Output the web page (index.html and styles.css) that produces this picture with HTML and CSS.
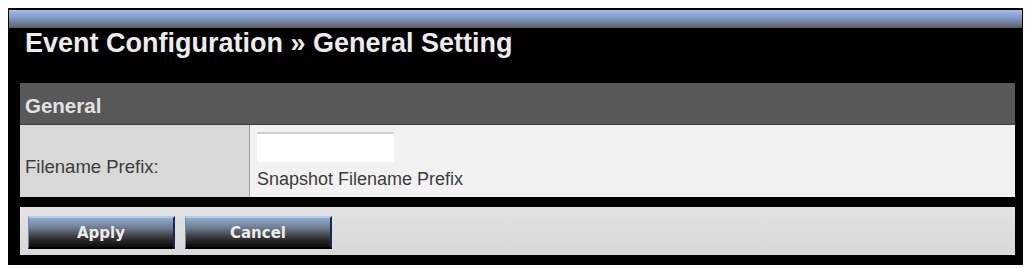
FILE: index.html
```html
<!DOCTYPE html>
<html lang="en">
<head>
    <meta charset="UTF-8">
    <title>Event Configuration - General Setting</title>
    <link rel="stylesheet" href="styles.css">
</head>
<body>

    <!-- Main Panel -->
    <div class="panel">
        <div class="panel-bar"></div>
        <h1 class="panel-title">Event Configuration &raquo; General Setting</h1>

        <!-- General Section -->
        <div class="section">
            <div class="section-head">General</div>
            <div class="form-row">
                <div class="form-label">Filename Prefix:</div>
                <div class="form-value">
                    <input type="text" class="text-input">
                    <div class="hint">Snapshot Filename Prefix</div>
                </div>
            </div>
        </div>

        <!-- Buttons -->
        <div class="button-bar">
            <button type="button" class="btn">Apply</button>
            <button type="button" class="btn">Cancel</button>
        </div>
    </div>

</body>
</html>
```

FILE: styles.css
```css
/* General Styles */
body {
    margin: 8px 0 0 8px;
    font-family: 'Liberation Sans', Arial, sans-serif;
    background-color: #fff;
}

/* Panel */
.panel {
    width: 1015px;
    height: 257px;
    background-color: #000;
    padding: 2px 1px 0;
    box-sizing: border-box;
}

.panel-bar {
    height: 18px;
    background: linear-gradient(#a4bce6, #7f98c8 45%, #6e7486 80%, #5c5c60);
}

.panel-title {
    margin: 0;
    height: 55px;
    padding-left: 16px;
    font-size: 27px;
    line-height: 31px;
    font-weight: 700;
    color: #ececec;
}

/* Section */
.section {
    margin: 0 7px 0 11px;
}

.section-head {
    height: 42px;
    box-sizing: border-box;
    padding: 5px 0 0 5px;
    display: flex;
    align-items: center;
    background-color: #585858;
    border-bottom: 1px solid #3a3a3a;
    color: #e2e2e2;
    font-size: 20.5px;
    font-weight: 700;
}

.form-row {
    display: flex;
    height: 72px;
}

.form-label {
    width: 230px;
    box-sizing: border-box;
    padding: 12px 0 0 5px;
    display: flex;
    align-items: center;
    background-color: #d8d8d8;
    border-right: 1px solid #9a9a9a;
    color: #3c3c3c;
    font-size: 18.5px;
}

.form-value {
    flex: 1;
    padding: 7px 7px 0;
    background-color: #f2f2f2;
}

.text-input {
    display: block;
    width: 137px;
    height: 30px;
    margin: 0;
    padding: 0 4px;
    border: none;
    border-top: 2px solid #cfcfcf;
    background-color: #fff;
    box-sizing: border-box;
}

.hint {
    margin-top: 7px;
    font-size: 18px;
    color: #3c3c3c;
}

/* Button Bar */
.button-bar {
    display: flex;
    gap: 10px;
    height: 48px;
    box-sizing: border-box;
    margin: 10px 7px 0 11px;
    padding: 9px 8px 0;
    background: linear-gradient(#e2e2e2, #d8d8d8);
}

.btn {
    width: 147px;
    height: 33px;
    padding: 0;
    border-top: 2px solid #aecaf0;
    border-left: 1px solid #7088b4;
    border-right: 2px solid #1a2756;
    border-bottom: 2px solid #000;
    background: linear-gradient(#93abcf, #6f7a8e 35%, #3a3a3c 65%, #0a0a0a);
    color: #ececec;
    font-family: 'DejaVu Sans', Verdana, sans-serif;
    font-size: 15px;
    font-weight: 700;
    cursor: pointer;
}
```
